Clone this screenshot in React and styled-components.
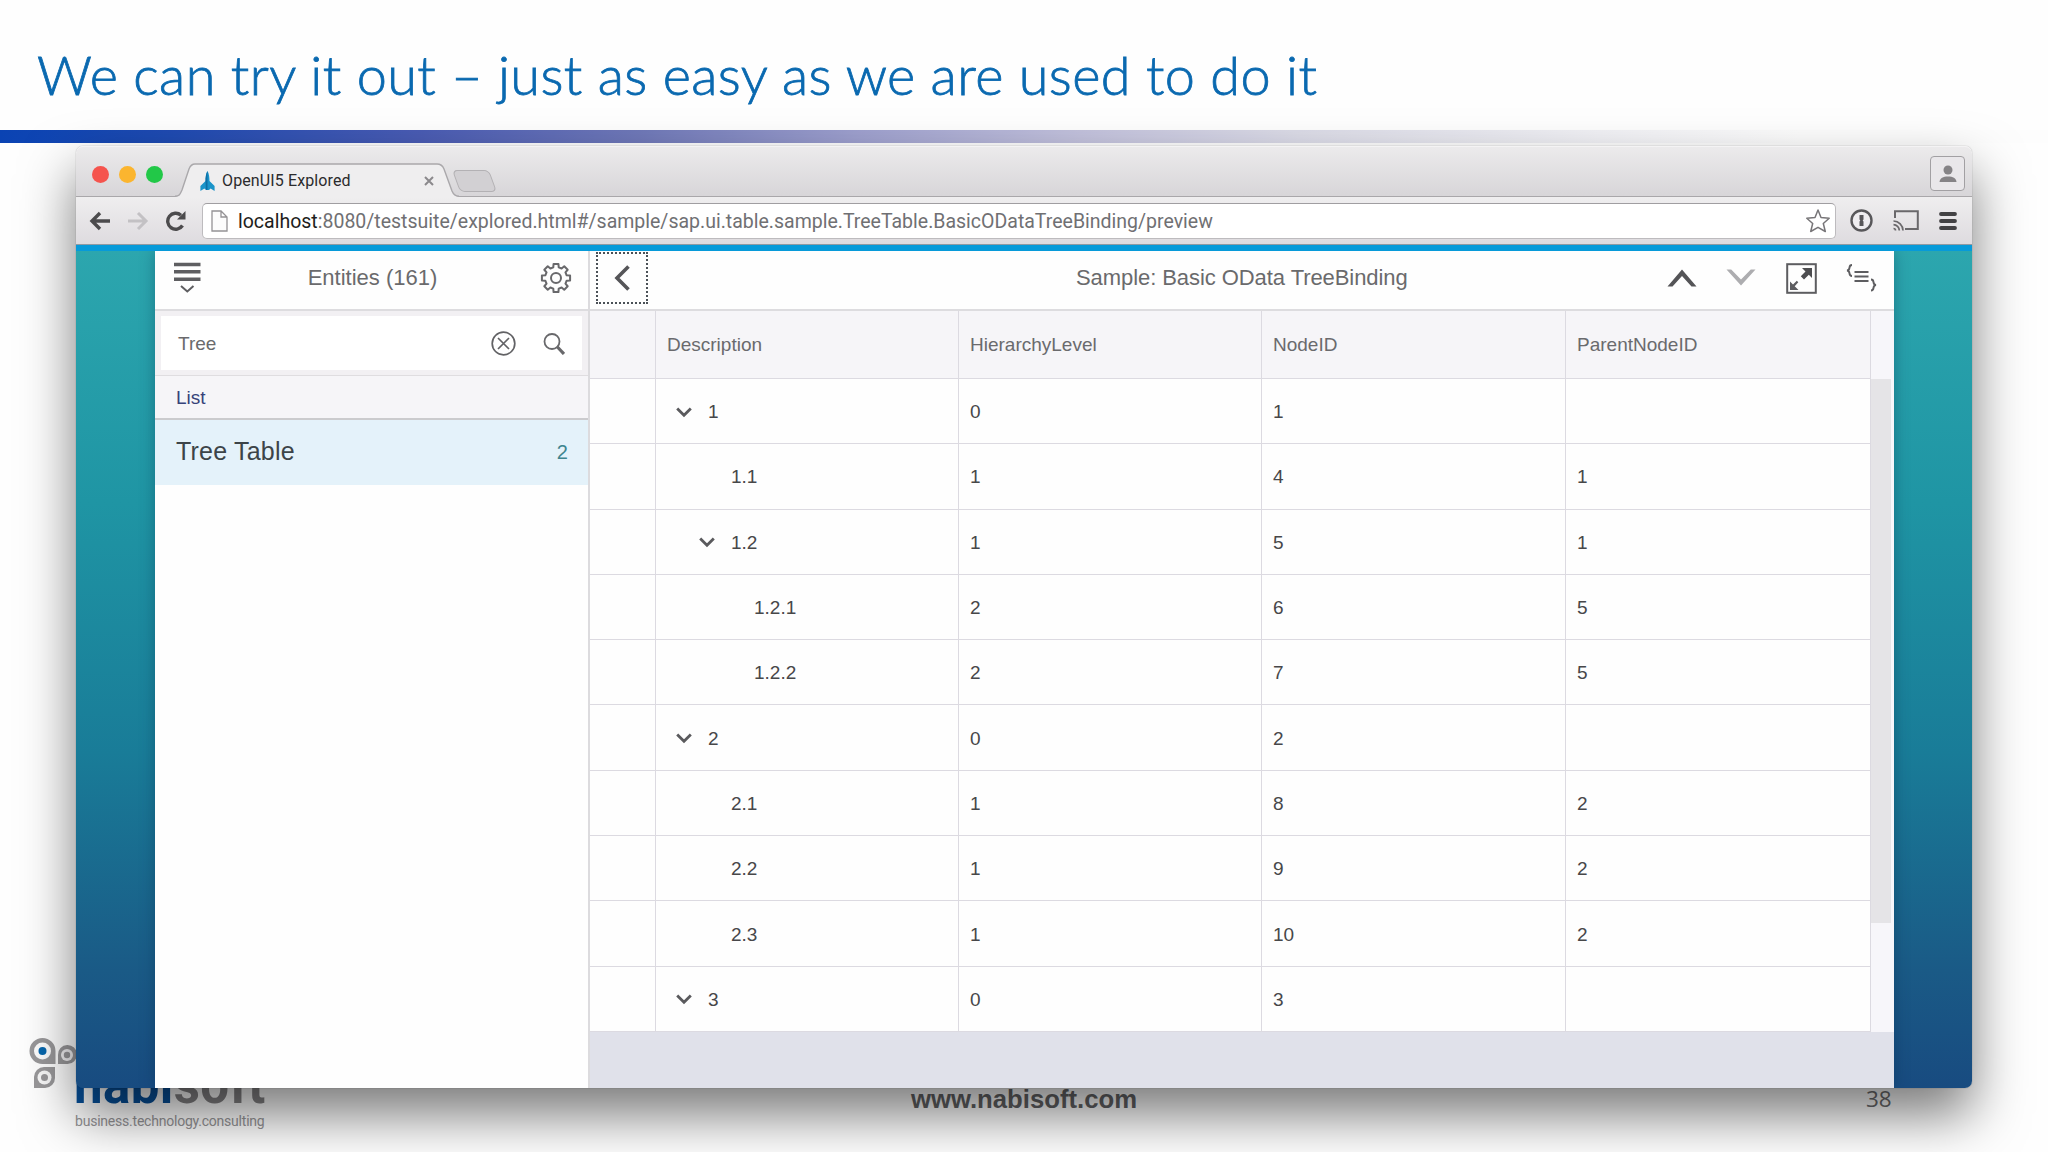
import styled, { createGlobalStyle, css } from "styled-components";

const GlobalStyle = createGlobalStyle`
  * {
    box-sizing: border-box;
  }
  body {
    margin: 0;
    background: #fdfdfd;
    overflow: hidden;
  }
`;

const Slide = styled.div`
  width: 2048px;
  height: 1152px;
  display: flex;
  flex-direction: column;
  overflow: hidden;
  background: #fefefe;
  font-family: "Liberation Sans", Arial, sans-serif;
`;

const SlideHeader = styled.header`
  height: 130px;
  flex: none;
  padding: 43px 0 0 37px;
`;

const SlideTitle = styled.h1`
  margin: 0;
  font-family: Lato, sans-serif;
  font-size: 54px;
  line-height: 64px;
  font-weight: 300;
  letter-spacing: 0.45px;
  word-spacing: -0.2px;
  -webkit-text-stroke: 0.8px #0a69b0;
  color: #0a69b0;
  white-space: nowrap;
`;

const Rule = styled.div`
  height: 13px;
  flex: none;
  background: linear-gradient(
    90deg,
    #0a43b3 0,
    #1f4bb2 170px,
    #4a5cb4 420px,
    #7079b9 640px,
    #9fa1cf 860px,
    #c3c2dd 1080px,
    #dcdce8 1300px,
    #f2f2f6 1600px,
    #fdfdfd 1800px
  );
`;

const BrowserWindow = styled.section`
  position: relative;
  z-index: 1;
  flex: none;
  width: 1896px;
  height: 942px;
  margin: 3px 0 0 76px;
  display: flex;
  flex-direction: column;
  border-radius: 7px;
  box-shadow: 0 0 1px rgba(0, 0, 0, 0.5), 0 27px 54px rgba(0, 0, 0, 0.52);
`;

const TabStrip = styled.div`
  height: 51px;
  flex: none;
  display: flex;
  align-items: flex-end;
  border-radius: 7px 7px 0 0;
  background: linear-gradient(#ecebec, #d7d5d8);
  box-shadow: inset 0 1px 0 #f4f3f4, inset 0 -1px 0 #a9a7aa;
`;

const Lights = styled.div`
  display: flex;
  gap: 10px;
  padding: 0 0 14px 16px;
  width: 99px;
`;

const Light = styled.span`
  width: 17px;
  height: 17px;
  border-radius: 50%;
  background: ${(props) => props.$color};
`;

const Tab = styled.div`
  position: relative;
  width: 283px;
  height: 34px;
  display: flex;
  align-items: center;
  padding: 1px 24px 0 25px;
  font-family: Roboto, sans-serif;
  font-size: 16px;
  letter-spacing: 0.12px;
  color: #2b2b2d;
`;

const TabShape = styled.svg`
  position: absolute;
  left: 0;
  top: 0;
`;

const TabIcon = styled.svg`
  position: relative;
  margin-right: 7px;
`;

const TabText = styled.span`
  position: relative;
  flex: 1;
`;

const TabClose = styled.svg`
  position: relative;
`;

const NewTab = styled.div`
  width: 37px;
  height: 22px;
  margin: 0 0 5px -2px;
  transform: skewX(20deg);
  border: 1px solid #b3b1b4;
  border-radius: 5px;
  background: #d2d0d3;
`;

const UserBox = styled.div`
  width: 35px;
  height: 35px;
  margin: 0 7px 6px auto;
  display: flex;
  align-items: center;
  justify-content: center;
  border: 1.5px solid #a2a0a3;
  border-radius: 4px;
  background: #e9e7ea;
`;

const Toolbar = styled.div`
  height: 48px;
  flex: none;
  display: flex;
  align-items: center;
  padding: 0 15px 0 13px;
  background: linear-gradient(#efeeef, #dedbdf);
  border-bottom: 1px solid #8f9aa3;
`;

const NavIcons = styled.div`
  width: 113px;
  display: flex;
  gap: 16px;
`;

const UrlBox = styled.div`
  width: 1634px;
  height: 36px;
  display: flex;
  align-items: center;
  padding: 0 5px 0 8px;
  background: #fff;
  border: 1px solid #bdbbbe;
  border-top-color: #a09ea1;
  border-radius: 5px;
`;

const Url = styled.span`
  flex: 1;
  padding: 1px 0 0 10px;
  font-family: Roboto, sans-serif;
  font-size: 19.5px;
  color: #707073;
  white-space: nowrap;

  b {
    font-weight: 400;
    color: #1e1e20;
  }
`;

const Extensions = styled.div`
  flex: 1;
  display: flex;
  align-items: center;
  justify-content: space-between;
  padding-left: 14px;
`;

const Page = styled.div`
  flex: 1;
  min-height: 0;
  display: flex;
  padding-left: 79px;
  border-top: 6px solid #079ad9;
  border-radius: 0 0 7px 7px;
  background: linear-gradient(#2ca6ae 0%, #1f95a4 30%, #197c98 60%, #1a5a86 86%, #184b80 100%);
`;

const Shell = styled.main`
  width: 1739px;
  display: flex;
  background: #fefefe;
  box-shadow: 0 0 14px rgba(0, 40, 70, 0.35);
  clip-path: inset(0 -20px 0 -20px);
`;

const Master = styled.aside`
  width: 435px;
  flex: none;
  border-right: 2px solid #dcdbde;
`;

const BarBase = css`
  height: 60px;
  display: flex;
  align-items: center;
  border-bottom: 2px solid #dddcdf;
  font-size: 22px;
  color: #6a6a6c;
`;

const MasterBar = styled.div`
  ${BarBase}
  justify-content: space-between;
  padding: 0 16px 4px 19px;
`;

const MasterTitle = styled.span`
  padding-left: 4px;
`;

const SearchArea = styled.div`
  height: 65px;
  padding: 5px 6px;
  background: #f2f0f3;
  border-bottom: 1px solid #dfdde0;
`;

const SearchField = styled.div`
  height: 54px;
  display: flex;
  align-items: center;
  padding: 1px 17px 0 17px;
  background: #fff;
  font-size: 19px;
  color: #6a6a6c;
`;

const SearchText = styled.span`
  flex: 1;
`;

const ClearIcon = styled.svg`
  margin-right: 27px;
`;

const GroupHeader = styled.div`
  height: 44px;
  display: flex;
  align-items: center;
  padding: 2px 21px 0;
  background: #f6f5f8;
  border-bottom: 2px solid #cbcbce;
  font-size: 19px;
  color: #37437a;
`;

const ListItem = styled.div`
  height: 65px;
  display: flex;
  align-items: center;
  justify-content: space-between;
  padding: 0 20px 3px 21px;
  background: #e4f2fa;
  font-size: 25px;
  letter-spacing: 0.2px;
  color: #3c4448;
`;

const Counter = styled.span`
  padding-top: 3px;
  font-size: 20px;
  color: #3f858f;
`;

const Detail = styled.div`
  flex: 1;
  display: flex;
  flex-direction: column;
  background: #e0e1ea;
`;

const DetailBar = styled.div`
  ${BarBase}
  flex: none;
  background: #fefefe;
  padding: 0 17px 4px 6px;
`;

const BackButton = styled.button`
  width: 52px;
  height: 52px;
  padding: 0;
  display: flex;
  align-items: center;
  justify-content: center;
  background: none;
  border: 2px dotted #4b5157;
`;

const DetailTitle = styled.span`
  margin-left: 428px;
  letter-spacing: -0.07px;
`;

const Actions = styled.div`
  margin-left: auto;
  display: flex;
  align-items: center;
  gap: 29.5px;
`;

const TableArea = styled.div`
  display: flex;
  background: #f7f6fa;
`;

const Table = styled.div`
  width: 1281px;
`;

const Row = styled.div`
  display: grid;
  grid-template-columns: 66px 303px 303px 304px 305px;
  height: ${(props) => (props.$head ? 68 : 65.3)}px;
  background: ${(props) => (props.$head ? "#f6f5f8" : "#fefefe")};
`;

const Cell = styled.div`
  display: flex;
  align-items: center;
  padding: ${(props) => (props.$head ? 1 : 2)}px 0 0 11px;
  border-right: 1px solid #dcdae1;
  border-bottom: 1px solid #dcdae1;
  font-size: 19px;
  color: ${(props) => (props.$head ? "#6a6a6d" : "#474749")};
`;

const TreeCell = styled(Cell)`
  padding-left: ${(props) => 20 + props.$level * 23}px;
`;

const Twisty = styled.span`
  width: 32px;
  display: flex;
`;

const Scroller = styled.div`
  flex: 1;
  padding: 68px 3px 0 0;
`;

const Thumb = styled.div`
  height: 544px;
  background: #e5e4e7;
`;

const Footer = styled.footer`
  flex: none;
  height: 120px;
  margin-top: -56px;
  display: grid;
  grid-template-columns: 911px 1fr 157px;
`;

const Brand = styled.div`
  display: flex;
  padding: 4px 0 0 28px;
`;

const BrandText = styled.div`
  margin-left: -5px;
  padding-top: 22px;
`;

const BrandName = styled.div`
  font-family: Roboto, sans-serif;
  font-weight: 700;
  font-size: 51px;
  line-height: 56px;
  letter-spacing: 0.4px;
  color: #07519c;

  span {
    color: #858486;
  }
`;

const Tagline = styled.div`
  margin: -3px 0 0 1px;
  font-family: Roboto, sans-serif;
  font-size: 14px;
  line-height: 20px;
  letter-spacing: -0.22px;
  color: #959496;
  white-space: nowrap;
`;

const Site = styled.div`
  padding-top: 52px;
  font-weight: 700;
  font-size: 25.7px;
  line-height: 30px;
  color: #636365;
`;

const PageNumber = styled.div`
  padding-top: 52px;
  margin-left: -25px;
  font-family: "Open Sans", sans-serif;
  font-size: 22.5px;
  line-height: 30px;
  color: #6d6d6f;
`;

const columns = ["Description", "HierarchyLevel", "NodeID", "ParentNodeID"];

const nodes = [
  { text: "1", level: 0, id: 1, parent: "", open: true },
  { text: "1.1", level: 1, id: 4, parent: 1 },
  { text: "1.2", level: 1, id: 5, parent: 1, open: true },
  { text: "1.2.1", level: 2, id: 6, parent: 5 },
  { text: "1.2.2", level: 2, id: 7, parent: 5 },
  { text: "2", level: 0, id: 2, parent: "", open: true },
  { text: "2.1", level: 1, id: 8, parent: 2 },
  { text: "2.2", level: 1, id: 9, parent: 2 },
  { text: "2.3", level: 1, id: 10, parent: 2 },
  { text: "3", level: 0, id: 3, parent: "", open: true },
];

// outline of the 8-tooth settings gear, centred on 0,0
const gearPath = () => {
  const pts = [];
  for (let i = 0; i < 8; i++) {
    const a = (i * Math.PI) / 4 - Math.PI / 2;
    [[-0.25, 11], [-0.17, 14.3], [0.17, 14.3], [0.25, 11]].forEach(([d, r]) =>
      pts.push(`${(r * Math.cos(a + d)).toFixed(2)} ${(r * Math.sin(a + d)).toFixed(2)}`)
    );
  }
  return `M${pts.join("L")}Z`;
};

const Tabs = () => (
  <TabStrip>
    <Lights>
      <Light $color="#f5544e" />
      <Light $color="#fbb52f" />
      <Light $color="#22c848" />
    </Lights>
    <Tab>
      <TabShape width="284" height="34" viewBox="0 0 284 34">
        <path d="M0 34C5 33 5 31 7 27L14 6Q16 1 20 1H262Q267 1 269 6L277 28Q279 33 284 34Z" fill="#efeeef" />
        <path d="M0 33.3C5 33 5 31 7 27L14 6Q16 1 20 1H262Q267 1 269 6L277 28Q279 33 284 33.3" fill="none" stroke="#aaa8ab" strokeWidth="1.4" />
      </TabShape>
      <TabIcon width="15" height="20" viewBox="0 0 15 20">
        <path d="M7.5 0C9.2 3 9.4 6 9.5 10L14.6 15V20L10.6 17.5L9 19H6L4.4 17.5L0.4 20V15L5.5 10C5.6 6 5.8 3 7.5 0Z" fill="#1b94c9" />
        <path d="M7.5 0C5.8 3 5.6 6 5.5 10L6 19H7.5Z" fill="#0c6fa6" />
      </TabIcon>
      <TabText>OpenUI5 Explored</TabText>
      <TabClose width="10" height="10" viewBox="0 0 10 10">
        <path d="M1 1L9 9M9 1L1 9" stroke="#8b898c" strokeWidth="2" />
      </TabClose>
    </Tab>
    <NewTab />
    <UserBox>
      <svg width="18" height="18" viewBox="0 0 18 18" fill="#858386">
        <circle cx="9" cy="5" r="4.5" />
        <path d="M0.5 17C1 13 4 11.5 9 11.5S17 13 17.5 17Z" />
      </svg>
    </UserBox>
  </TabStrip>
);

const AddressBar = () => (
  <Toolbar>
    <NavIcons>
      <svg width="22" height="20" viewBox="0 0 22 20" fill="none" stroke="#4c4b4d" strokeWidth="3.4">
        <path d="M21 10H3M11 2L3 10L11 18" />
      </svg>
      <svg width="22" height="20" viewBox="0 0 22 20" fill="none" stroke="#c3c1c4" strokeWidth="3">
        <path d="M1 10H19M11 2L19 10L11 18" />
      </svg>
      <svg width="22" height="20" viewBox="0 0 22 20" fill="none" stroke="#4c4b4d" strokeWidth="3.4">
        <path d="M17.5 14.5A8 8 0 1 1 16 4.2" />
        <path d="M20.5 0V8.5H12Z" fill="#4c4b4d" stroke="none" />
      </svg>
    </NavIcons>
    <UrlBox>
      <svg width="17" height="22" viewBox="0 0 17 22" fill="#fcfcfc" stroke="#949295" strokeWidth="1.3">
        <path d="M1 1H10L16 7V21H1ZM10 1V7H16" />
      </svg>
      <Url>
        <b>localhost</b>:8080/testsuite/explored.html#/sample/sap.ui.table.sample.TreeTable.BasicODataTreeBinding/preview
      </Url>
      <svg width="24" height="24" viewBox="0 0 24 24" fill="#fff" stroke="#777578" strokeWidth="1.5" strokeLinejoin="round">
        <path d="M12 1L15 8.5L23.2 9.3L17.3 14.5L19.3 22.5L12 18.3L4.7 22.5L6.7 14.5L0.8 9.3L9 8.5Z" />
      </svg>
    </UrlBox>
    <Extensions>
      <svg width="23" height="23" viewBox="0 0 23 23">
        <circle cx="11.5" cy="11.5" r="10" fill="#efedf0" stroke="#58575a" strokeWidth="2.4" />
        <path d="M9.5 6H13.5V10.5L12.7 11.5L13.5 12.5V17H9.5V12.5L10.3 11.5L9.5 10.5Z" fill="#58575a" />
      </svg>
      <svg width="26" height="21" viewBox="0 0 26 21" fill="none" stroke="#6a686b" strokeWidth="2">
        <path d="M2 8V1.2H24.8V19H12" />
        <path d="M0.5 18.5A2 2 0 0 1 2.5 20.5M0.5 14.7A6 6 0 0 1 6.3 20.5M0.5 11A9.6 9.6 0 0 1 10 20.5" strokeWidth="1.7" />
      </svg>
      <svg width="18" height="18" viewBox="0 0 18 18" stroke="#434244" strokeWidth="3.8" strokeLinecap="round">
        <path d="M2 2H16M2 9H16M2 16H16" />
      </svg>
    </Extensions>
  </Toolbar>
);

const MasterList = () => (
  <Master>
    <MasterBar>
      <svg width="27" height="32" viewBox="0 0 27 32" fill="none" stroke="#5e5e61">
        <path d="M0 2.5H26.5M0 9.8H26.5M0 17.2H26.5" strokeWidth="3.6" />
        <path d="M7 24L13.3 29.5L19.5 24" strokeWidth="2" />
      </svg>
      <MasterTitle>Entities (161)</MasterTitle>
      <svg width="32" height="32" viewBox="-16 -16 32 32" fill="none" stroke="#68686b" strokeWidth="2" strokeLinejoin="round">
        <path d={gearPath()} />
        <circle r="5" />
      </svg>
    </MasterBar>
    <SearchArea>
      <SearchField>
        <SearchText>Tree</SearchText>
        <ClearIcon width="25" height="25" viewBox="0 0 25 25" fill="none" stroke="#626265" strokeWidth="1.7">
          <circle cx="12.5" cy="12.5" r="11.3" />
          <path d="M7 7L18 18M18 7L7 18" />
        </ClearIcon>
        <svg width="22" height="22" viewBox="0 0 22 22" fill="none" stroke="#68686b" strokeWidth="1.8">
          <circle cx="9" cy="8.5" r="7.5" />
          <path d="M14 13.5L21 21" strokeWidth="3.2" />
        </svg>
      </SearchField>
    </SearchArea>
    <GroupHeader>List</GroupHeader>
    <ListItem>
      Tree Table
      <Counter>2</Counter>
    </ListItem>
  </Master>
);

const SampleBar = () => (
  <DetailBar>
    <BackButton>
      <svg width="16" height="26" viewBox="0 0 16 26" fill="none" stroke="#555558" strokeWidth="3.6">
        <path d="M14.5 1.5L3 13L14.5 24.5" />
      </svg>
    </BackButton>
    <DetailTitle>Sample: Basic OData TreeBinding</DetailTitle>
    <Actions>
      <svg width="30" height="18" viewBox="0 0 30 18">
        <path d="M0.5 17.5L15 0.5L29.5 17.5H24.5L15 7L5.5 17.5Z" fill="#545457" />
      </svg>
      <svg width="30" height="18" viewBox="0 0 30 18">
        <path d="M0.5 0.5L15 16.5L29.5 0.5H24.8L15 10.5L5.2 0.5Z" fill="#adadb0" />
      </svg>
      <svg width="31" height="31" viewBox="0 0 31 31">
        <rect x="1.2" y="1.2" width="28.6" height="28.6" fill="none" stroke="#5d5d60" strokeWidth="2" />
        <path d="M16 5H26V15L22.8 11.8L18 16.5L14.8 13.3L19.5 8.5Z" fill="#4d4d50" />
        <path d="M4 27V18.500L7 21.500L10.800 17.800L12.300 19.300L8.700 23.200L12.500 27Z" fill="#5d5d60" />
      </svg>
      <svg width="31" height="28" viewBox="0 0 31 28" fill="none" stroke="#5d5d60" strokeWidth="1.9">
        <path d="M6 1C1.5 1 5.5 6 1 6.5C5.5 7 1.5 12 6 12" />
        <path d="M8.5 8H22.5M8.5 12.5H22.5M8.5 17H22.5" />
        <path d="M25 15.5C29.5 15.5 25.5 20.5 30 21C25.5 21.5 29.5 26.5 25 26.5" />
      </svg>
    </Actions>
  </DetailBar>
);

const TreeTable = () => (
  <TableArea>
    <Table>
      <Row $head>
        <Cell $head />
        {columns.map((name) => (
          <Cell $head key={name}>{name}</Cell>
        ))}
      </Row>
      {nodes.map((node) => (
        <Row key={node.id}>
          <Cell />
          <TreeCell $level={node.level}>
            <Twisty>
              {node.open && (
                <svg width="16" height="11" viewBox="0 0 16 11" fill="none" stroke="#5a5a5d" strokeWidth="2.8">
                  <path d="M1.2 1.5L8 8.3L14.8 1.5" />
                </svg>
              )}
            </Twisty>
            {node.text}
          </TreeCell>
          <Cell>{node.level}</Cell>
          <Cell>{node.id}</Cell>
          <Cell>{node.parent}</Cell>
        </Row>
      ))}
    </Table>
    <Scroller>
      <Thumb />
    </Scroller>
  </TableArea>
);

const App = () => {
  return (
    <>
      <GlobalStyle />
      <Slide>
        <SlideHeader>
          <SlideTitle>We can try it out – just as easy as we are used to do it</SlideTitle>
        </SlideHeader>
        <Rule />
        <BrowserWindow>
          <Tabs />
          <AddressBar />
          <Page>
            <Shell>
              <MasterList />
              <Detail>
                <SampleBar />
                <TreeTable />
              </Detail>
            </Shell>
          </Page>
        </BrowserWindow>
        <Footer>
          <Brand>
            <svg width="51" height="54" viewBox="0 0 51 54">
              <path d="M14.5 2A13 13 0 0 1 27.5 15V28H14.5A13 13 0 0 1 14.5 2Z" fill="#99989a" />
              <circle cx="14.5" cy="15" r="8.5" fill="#fdfdfd" />
              <circle cx="14.5" cy="15" r="4" fill="#0767ad" />
              <path d="M30 28V19A9.5 9.5 0 1 1 39.5 28Z" fill="#99989a" />
              <circle cx="39" cy="19" r="6" fill="#f3f2f4" />
              <circle cx="39" cy="19" r="3.2" fill="#99989a" />
              <path d="M6 52V41A10 10 0 0 1 16 31H27V42A10 10 0 0 1 17 52Z" fill="#99989a" />
              <circle cx="16.5" cy="41.5" r="7" fill="#f8f8f8" />
              <circle cx="16.5" cy="41.5" r="3.5" fill="#99989a" />
            </svg>
            <BrandText>
              <BrandName>nabi<span>soft</span></BrandName>
              <Tagline>business.technology.consulting</Tagline>
            </BrandText>
          </Brand>
          <Site>www.nabisoft.com</Site>
          <PageNumber>38</PageNumber>
        </Footer>
      </Slide>
    </>
  );
};

export default App;
